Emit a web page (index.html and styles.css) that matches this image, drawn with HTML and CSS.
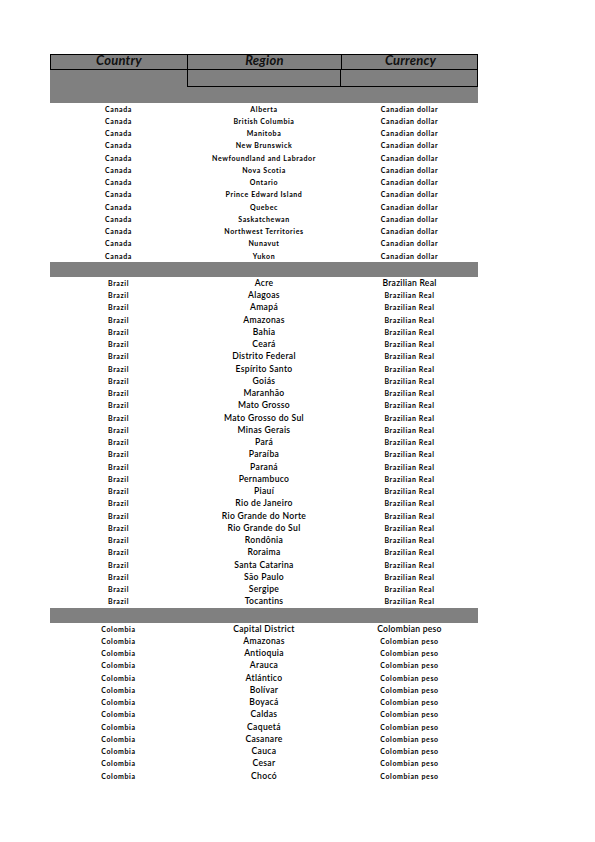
FILE: index.html
```html
<!DOCTYPE html>
<html lang="en">
<head>
<meta charset="utf-8">
<title>Regions</title>
<link rel="stylesheet" href="styles.css">
</head>
<body>
<div class="sheet">
  <div class="head">
    <div class="head-row">
      <div class="hc hc1">Country</div>
      <div class="hc hc2">Region</div>
      <div class="hc hc3">Currency</div>
    </div>
    <div class="sub-row">
      <div class="sc sc1"></div>
      <div class="sc sc2"></div>
      <div class="sc sc3"></div>
    </div>
  </div>

  <div class="group">
    <div class="row"><span>Canada</span><span>Alberta</span><span>Canadian dollar</span></div>
    <div class="row"><span>Canada</span><span>British Columbia</span><span>Canadian dollar</span></div>
    <div class="row"><span>Canada</span><span>Manitoba</span><span>Canadian dollar</span></div>
    <div class="row"><span>Canada</span><span>New Brunswick</span><span>Canadian dollar</span></div>
    <div class="row"><span>Canada</span><span>Newfoundland and Labrador</span><span>Canadian dollar</span></div>
    <div class="row"><span>Canada</span><span>Nova Scotia</span><span>Canadian dollar</span></div>
    <div class="row"><span>Canada</span><span>Ontario</span><span>Canadian dollar</span></div>
    <div class="row"><span>Canada</span><span>Prince Edward Island</span><span>Canadian dollar</span></div>
    <div class="row"><span>Canada</span><span>Quebec</span><span>Canadian dollar</span></div>
    <div class="row"><span>Canada</span><span>Saskatchewan</span><span>Canadian dollar</span></div>
    <div class="row"><span>Canada</span><span>Northwest Territories</span><span>Canadian dollar</span></div>
    <div class="row"><span>Canada</span><span>Nunavut</span><span>Canadian dollar</span></div>
    <div class="row"><span>Canada</span><span>Yukon</span><span>Canadian dollar</span></div>
  </div>

  <div class="band"></div>

  <div class="group big-region">
    <div class="row first"><span>Brazil</span><span>Acre</span><span>Brazilian Real</span></div>
    <div class="row"><span>Brazil</span><span>Alagoas</span><span>Brazilian Real</span></div>
    <div class="row"><span>Brazil</span><span>Amapá</span><span>Brazilian Real</span></div>
    <div class="row"><span>Brazil</span><span>Amazonas</span><span>Brazilian Real</span></div>
    <div class="row"><span>Brazil</span><span>Bahia</span><span>Brazilian Real</span></div>
    <div class="row"><span>Brazil</span><span>Ceará</span><span>Brazilian Real</span></div>
    <div class="row"><span>Brazil</span><span>Distrito Federal</span><span>Brazilian Real</span></div>
    <div class="row"><span>Brazil</span><span>Espírito Santo</span><span>Brazilian Real</span></div>
    <div class="row"><span>Brazil</span><span>Goiás</span><span>Brazilian Real</span></div>
    <div class="row"><span>Brazil</span><span>Maranhão</span><span>Brazilian Real</span></div>
    <div class="row"><span>Brazil</span><span>Mato Grosso</span><span>Brazilian Real</span></div>
    <div class="row"><span>Brazil</span><span>Mato Grosso do Sul</span><span>Brazilian Real</span></div>
    <div class="row"><span>Brazil</span><span>Minas Gerais</span><span>Brazilian Real</span></div>
    <div class="row"><span>Brazil</span><span>Pará</span><span>Brazilian Real</span></div>
    <div class="row"><span>Brazil</span><span>Paraíba</span><span>Brazilian Real</span></div>
    <div class="row"><span>Brazil</span><span>Paraná</span><span>Brazilian Real</span></div>
    <div class="row"><span>Brazil</span><span>Pernambuco</span><span>Brazilian Real</span></div>
    <div class="row"><span>Brazil</span><span>Piauí</span><span>Brazilian Real</span></div>
    <div class="row"><span>Brazil</span><span>Rio de Janeiro</span><span>Brazilian Real</span></div>
    <div class="row"><span>Brazil</span><span>Rio Grande do Norte</span><span>Brazilian Real</span></div>
    <div class="row"><span>Brazil</span><span>Rio Grande do Sul</span><span>Brazilian Real</span></div>
    <div class="row"><span>Brazil</span><span>Rondônia</span><span>Brazilian Real</span></div>
    <div class="row"><span>Brazil</span><span>Roraima</span><span>Brazilian Real</span></div>
    <div class="row"><span>Brazil</span><span>Santa Catarina</span><span>Brazilian Real</span></div>
    <div class="row"><span>Brazil</span><span>São Paulo</span><span>Brazilian Real</span></div>
    <div class="row"><span>Brazil</span><span>Sergipe</span><span>Brazilian Real</span></div>
    <div class="row"><span>Brazil</span><span>Tocantins</span><span>Brazilian Real</span></div>
  </div>

  <div class="band"></div>

  <div class="group big-region">
    <div class="row first"><span>Colombia</span><span>Capital District</span><span>Colombian peso</span></div>
    <div class="row"><span>Colombia</span><span>Amazonas</span><span>Colombian peso</span></div>
    <div class="row"><span>Colombia</span><span>Antioquia</span><span>Colombian peso</span></div>
    <div class="row"><span>Colombia</span><span>Arauca</span><span>Colombian peso</span></div>
    <div class="row"><span>Colombia</span><span>Atlántico</span><span>Colombian peso</span></div>
    <div class="row"><span>Colombia</span><span>Bolívar</span><span>Colombian peso</span></div>
    <div class="row"><span>Colombia</span><span>Boyacá</span><span>Colombian peso</span></div>
    <div class="row"><span>Colombia</span><span>Caldas</span><span>Colombian peso</span></div>
    <div class="row"><span>Colombia</span><span>Caquetá</span><span>Colombian peso</span></div>
    <div class="row"><span>Colombia</span><span>Casanare</span><span>Colombian peso</span></div>
    <div class="row"><span>Colombia</span><span>Cauca</span><span>Colombian peso</span></div>
    <div class="row"><span>Colombia</span><span>Cesar</span><span>Colombian peso</span></div>
    <div class="row"><span>Colombia</span><span>Chocó</span><span>Colombian peso</span></div>
  </div>
</div>
</body>
</html>
```

FILE: styles.css
```css
html, body {
  margin: 0;
  padding: 0;
  background: #ffffff;
}

body {
  font-family: Lato, "Open Sans", "Liberation Sans", sans-serif;
  color: #000000;
}

.sheet {
  width: 428px;
  margin: 54px 0 0 50px;
}

.head {
  background: #808080;
  height: 48.5px;
}

.head-row {
  display: grid;
  grid-template-columns: 137px 154px 137px;
  height: 16px;
  box-sizing: border-box;
  border: 1px solid #000000;
}

.hc {
  font-size: 13px;
  font-weight: 700;
  font-style: italic;
  text-align: center;
  line-height: 11px;
  color: #111111;
  letter-spacing: 0.2px;
}

.hc1, .hc2 {
  border-right: 1px solid #000000;
}

.sub-row {
  display: grid;
  grid-template-columns: 137px 154px 137px;
  height: 17px;
}

.sc2 {
  border-left: 1px solid #000000;
  border-right: 1px solid #000000;
  border-bottom: 1px solid #000000;
}

.sc3 {
  border-right: 1px solid #000000;
  border-bottom: 1px solid #000000;
}

.row {
  display: grid;
  grid-template-columns: 137px 154px 137px;
  height: 12.25px;
  align-items: center;
  text-align: center;
  font-size: 7px;
  font-weight: 700;
  line-height: 12px;
  letter-spacing: 0.6px;
}

.big-region .row span:nth-child(2) {
  font-size: 8.6px;
  font-weight: 600;
  letter-spacing: 0.3px;
}

.big-region .row.first span:nth-child(3) {
  font-size: 8.6px;
  font-weight: 600;
  letter-spacing: 0.25px;
}

.band {
  background: #808080;
  height: 15px;
}
```
